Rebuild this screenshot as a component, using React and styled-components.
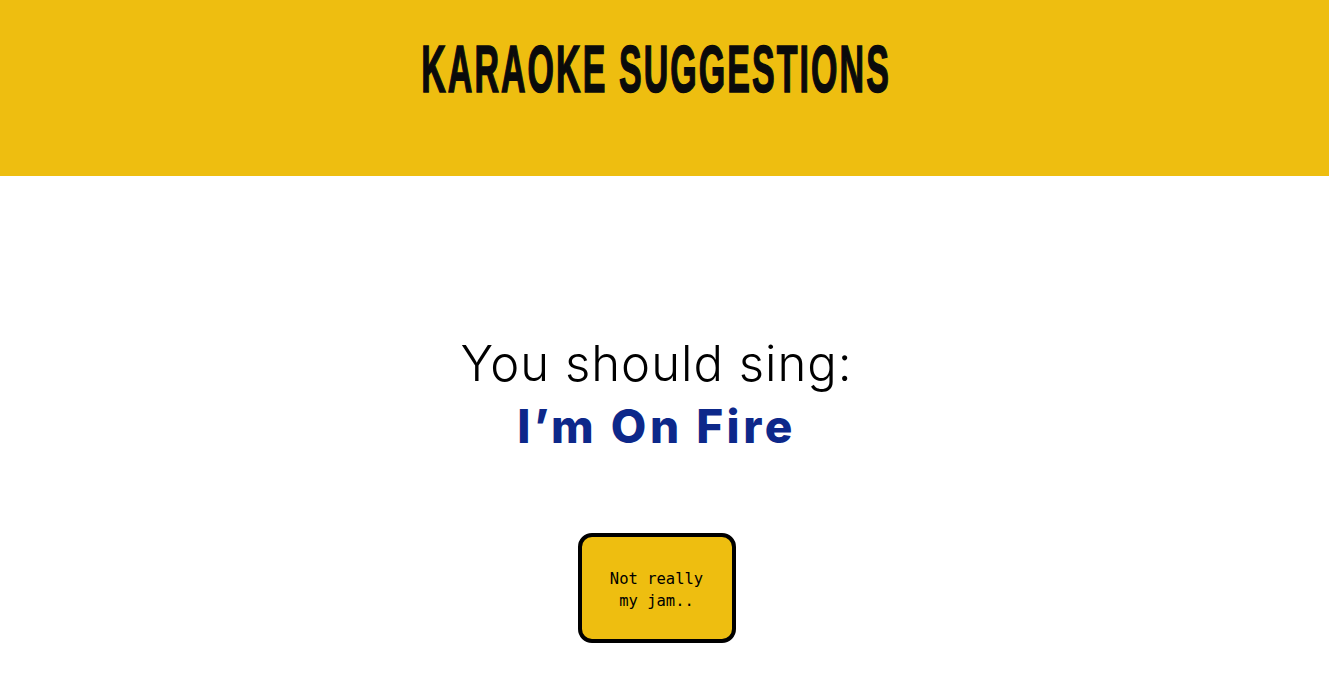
import React from "react";
import styled, { createGlobalStyle } from "styled-components";

const GlobalStyle = createGlobalStyle`
  body {
    margin: 0;
    padding-right: 16px;
    background: #ffffff;
    font-family: "Inter", "Liberation Sans", sans-serif;
  }
`;

const Header = styled.header`
  height: 176px;
  background: #eebe10;
  display: flex;
  justify-content: center;
  padding-top: 36px;
  box-sizing: border-box;
  margin-right: -16px;
  padding-right: 16px;
`;

const Title = styled.h1`
  margin: 0;
  font-family: "Liberation Sans Narrow", "Liberation Sans", sans-serif;
  font-weight: 700;
  font-size: 66px;
  line-height: 66px;
  letter-spacing: 4px;
  color: #0a0a0a;
  -webkit-text-stroke: 1.6px #0a0a0a;
  text-transform: uppercase;
  transform: scaleX(0.515);
  white-space: nowrap;
`;

const Main = styled.main`
  display: flex;
  flex-direction: column;
  align-items: center;
  padding-top: 157px;
`;

const Lead = styled.p`
  margin: 0;
  font-size: 49px;
  font-weight: 300;
  letter-spacing: 1px;
  line-height: 62px;
  color: #000;
  text-align: center;
`;

const Song = styled.p`
  margin: 0;
  font-size: 46px;
  font-weight: 800;
  letter-spacing: 3.5px;
  line-height: 62px;
  color: #0d288a;
  text-align: center;
`;

const NopeButton = styled.button`
  margin-top: 76px;
  width: 158px;
  height: 110px;
  background: #eebe10;
  border: 4px solid #000;
  border-radius: 14px;
  font-family: "DejaVu Sans Mono", "Liberation Mono", monospace;
  font-size: 15.5px;
  line-height: 22px;
  color: #000;
  padding: 4px 24px 0;
  cursor: pointer;
`;

export default function App() {
  return (
    <>
      <GlobalStyle />
      <Header>
        <Title>Karaoke Suggestions</Title>
      </Header>
      <Main>
        <Lead>You should sing:</Lead>
        <Song>I’m On Fire</Song>
        <NopeButton>Not really my jam..</NopeButton>
      </Main>
    </>
  );
}
